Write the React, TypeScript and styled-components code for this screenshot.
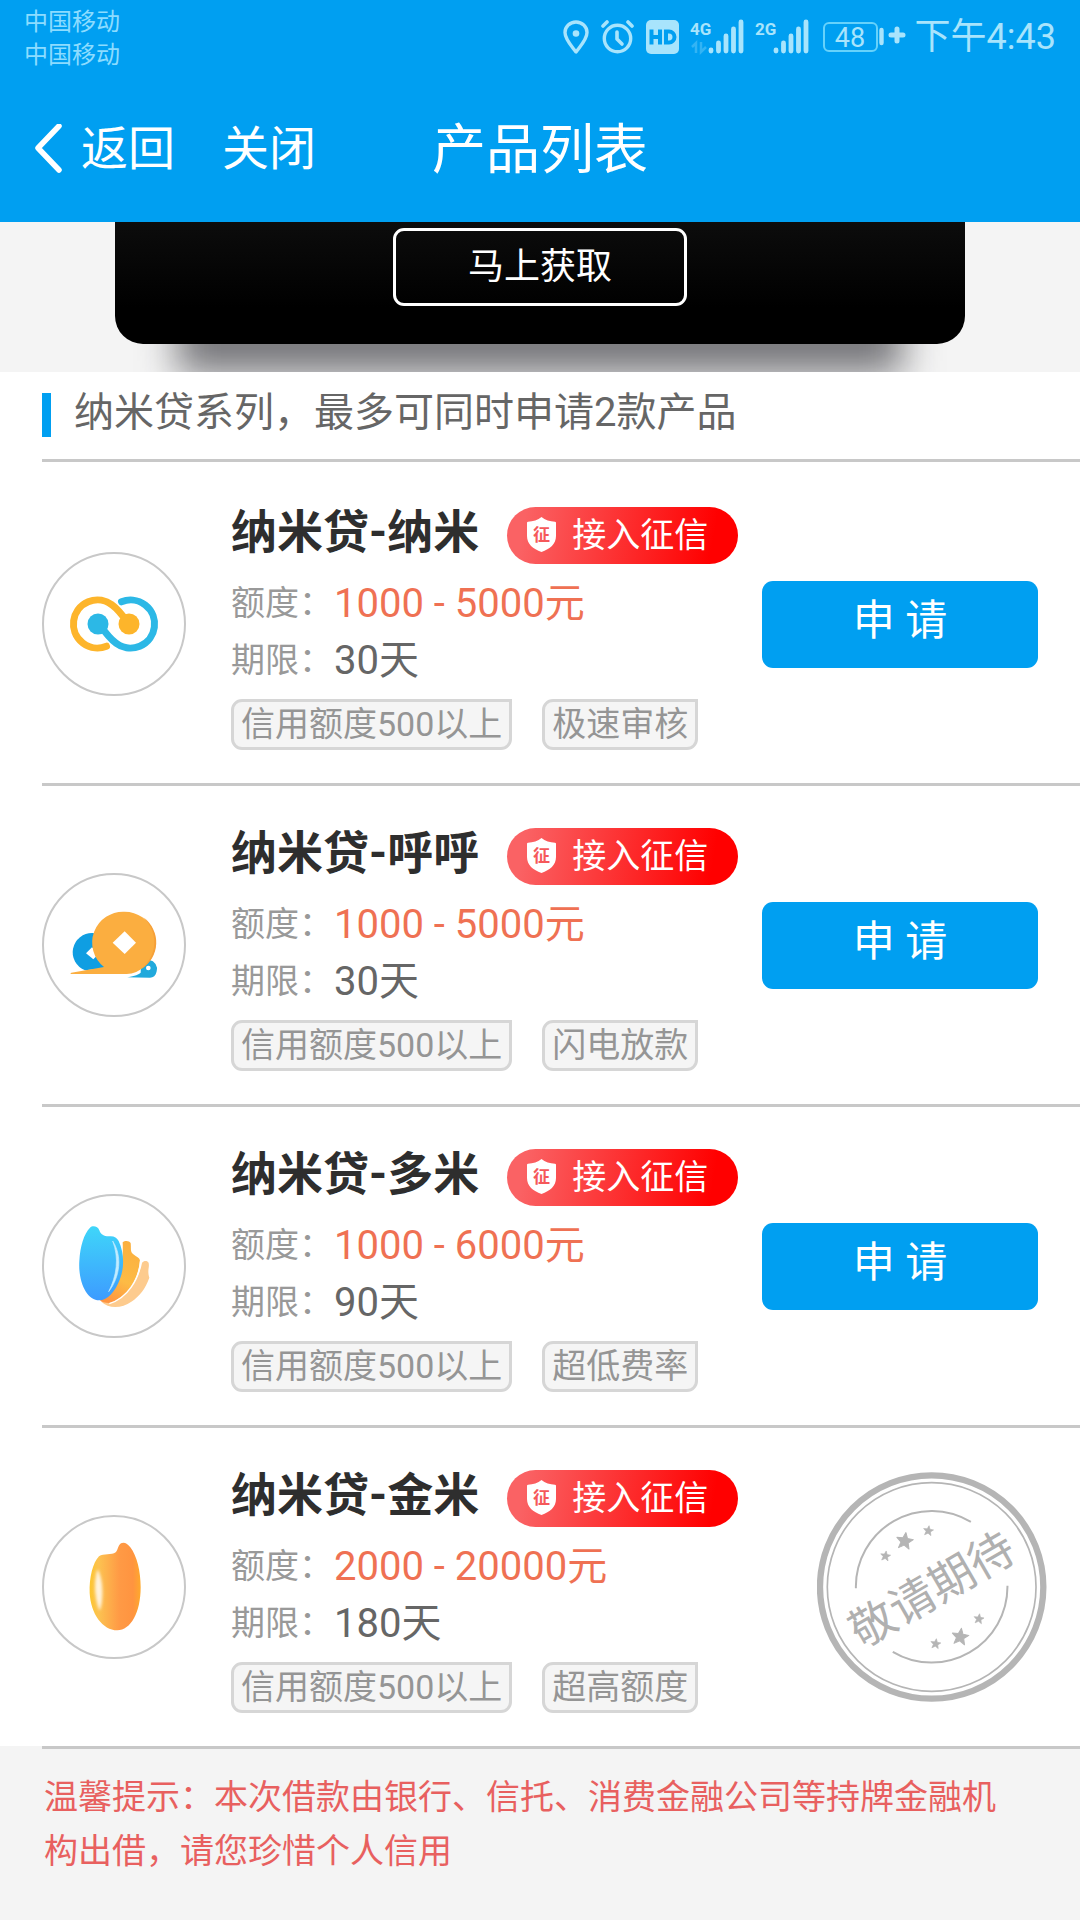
import React from "react";
import styled, { createGlobalStyle } from "styled-components";

const blue = "#009ff1";
const statusTint = "#a8e4fc";
const fontStack = `Roboto, "Noto Sans CJK SC", sans-serif`;

const GlobalStyle = createGlobalStyle`
  * { box-sizing: border-box; }
  body { margin: 0; background: #f4f4f4; font-family: ${fontStack}; }
  button { font-family: inherit; border: 0; padding: 0; background: none; cursor: pointer; }
  h1, h2, h3, p, ul, dl, dd, dt { margin: 0; padding: 0; font-weight: 400; }
  ul { list-style: none; }
  svg { display: block; flex: none; }
`;

/* ---------- header ---------- */

const Header = styled.header`
  background: ${blue};
  color: #fff;
`;

const StatusBar = styled.div`
  display: flex;
  justify-content: space-between;
  align-items: flex-start;
  height: 75px;
  padding: 0 24px;
`;

const Carriers = styled.div`
  padding-top: 6px;
  font-size: 24px;
  line-height: 33px;
  color: #8cdcff;
`;

const StatusIcons = styled.div`
  display: flex;
  align-items: center;
  gap: 12px;
  height: 74px;
  color: ${statusTint};
`;

const Clock = styled.time`
  font-size: 36px;
  line-height: 40px;
`;

const Nav = styled.nav`
  display: grid;
  grid-template-columns: 1fr auto 1fr;
  align-items: center;
  height: 147px;
`;

const NavActions = styled.div`
  display: flex;
  align-items: center;
  gap: 47px;
  padding-left: 33px;
`;

const NavButton = styled.button`
  display: flex;
  align-items: center;
  gap: 18px;
  color: #fff;
  font-size: 47px;
  line-height: 56px;
`;

const PageTitle = styled.h1`
  padding-top: 4px;
  font-size: 54px;
  line-height: 64px;
`;

/* ---------- banner ---------- */

const Banner = styled.section`
  height: 150px;
  padding: 0 115px;
  overflow: hidden;
`;

const BannerCard = styled.div`
  position: relative;
  z-index: 1;
  display: flex;
  justify-content: center;
  align-items: flex-start;
  height: 122px;
  padding-top: 6px;
  background: linear-gradient(#0c0c0c, #000 70%);
  border-radius: 0 0 28px 28px;
`;

const BannerShadow = styled.div`
  height: 70px;
  margin: -40px 62px 0;
  background: rgba(12, 12, 18, 0.54);
  filter: blur(19px);
`;

const BannerButton = styled.button`
  && { border: 3px solid #fff; }
  width: 294px;
  height: 78px;
  border-radius: 11px;
  color: #fff;
  font-size: 36px;
  line-height: 72px;
`;

/* ---------- product list ---------- */

const Products = styled.section`
  background: #fff;
`;

const SectionTitle = styled.h2`
  display: flex;
  gap: 23px;
  height: 87px;
  padding: 21px 0 0 42px;
  font-size: 40px;
  line-height: 40px;
  color: #666;

  &::before {
    content: "";
    width: 9px;
    height: 44px;
    background: ${blue};
  }
`;

const Divider = styled.hr`
  height: 3px;
  margin: 0 0 0 42px;
  border: 0;
  background: #c8c8c8;
`;

const List = styled.ul`
  padding-top: 3px;
`;

const Row = styled.div`
  display: flex;
  align-items: center;
  height: 318px;
  padding: 0 42px;
`;

const Logo = styled.div`
  flex: none;
  width: 144px;
  height: 144px;
  border: 2px solid #c8c8c8;
  border-radius: 50%;
  overflow: hidden;
`;

const Info = styled.div`
  flex: 1;
  min-width: 0;
  padding: 9px 0 0 45px;
`;

const NameLine = styled.div`
  display: flex;
  gap: 28px;
  height: 57px;
  margin-bottom: 11px;
`;

const Name = styled.h3`
  font-size: 46px;
  line-height: 50px;
  color: #2e2e2e;
  white-space: nowrap;
  && { font-weight: 700; }
`;

const CreditBadge = styled.span`
  display: flex;
  align-items: center;
  gap: 16px;
  width: 231px;
  height: 57px;
  padding: 0 0 2px 20px;
  border-radius: 29px;
  background: linear-gradient(100deg, #fa6264 8%, #ff0000 88%);
  color: #fff;
  font-size: 34px;
  line-height: 54px;
  white-space: nowrap;
`;

const Facts = styled.dl`
  margin: 0 0 10px;
`;

const Fact = styled.div`
  display: flex;
  align-items: center;
  line-height: 57px;
`;

const FactLabel = styled.dt`
  width: 103px;
  font-size: 34px;
  color: #999;
`;

const FactValue = styled.dd<{ $accent?: boolean }>`
  font-size: 40px;
  color: ${(p) => (p.$accent ? "#ef7153" : "#666")};
`;

const Tags = styled.ul`
  display: flex;
  gap: 30px;
`;

const Tag = styled.li`
  height: 51px;
  padding: 0 7px;
  border: 3px solid #d6d6d6;
  border-radius: 11px 0 11px 11px;
  background: #f5f5f5;
  font-size: 34px;
  line-height: 44px;
  color: #959595;
  white-space: nowrap;
`;

const ApplyButton = styled.button`
  flex: none;
  width: 276px;
  height: 87px;
  && { padding-bottom: 6px; }
  border-radius: 11px;
  background: ${blue};
  color: #fff;
  font-size: 42px;
  line-height: 48px;
`;

const StampBox = styled.div`
  flex: none;
  margin-right: -9px;
`;

const Notice = styled.footer`
  padding-bottom: 42px;
`;

const NoticeText = styled.p`
  padding: 21px 60px 0 44px;
  font-size: 34px;
  line-height: 54px;
  color: #e8605f;
`;

/* ---------- status icons ---------- */

const PinIcon = () => (
  <svg width="26" height="34" viewBox="0 0 26 34" fill="none" aria-hidden="true">
    <path d="M13 32C9 26.500 2 19.500 2 12.500a11 10.500 0 0 1 22 0C24 19.500 17 26.500 13 32Z" stroke="currentColor" strokeWidth="3.400" strokeLinejoin="round" />
    <circle cx="13" cy="13.500" r="3.300" fill="currentColor" />
  </svg>
);

const AlarmIcon = () => (
  <svg width="33" height="34" viewBox="0 0 33 34" fill="none" stroke="currentColor" strokeLinecap="round" aria-hidden="true">
    <circle cx="16.500" cy="18.500" r="13.200" strokeWidth="3.400" />
    <path d="M16 12v7l5 5" strokeWidth="3.600" strokeLinejoin="round" />
    <path d="M2 6l4-4M31 6l-4-4" strokeWidth="3.600" />
  </svg>
);

const HdIcon = () => (
  <svg width="33" height="34" viewBox="0 0 33 34" aria-hidden="true">
    <rect width="33" height="34" rx="5" fill="currentColor" />
    <path d="M5.500 9.500v15M14 9.500v15M5.500 17H14" stroke={blue} strokeWidth="4" fill="none" />
    <path d="M20 11.500h3a5.500 5.500 0 0 1 0 11H20Z" stroke={blue} strokeWidth="4" fill="none" />
  </svg>
);

const SignalIcon = ({ label, data }: { label: string; data?: boolean }) => (
  <svg width="53" height="36" viewBox="0 0 53 36" overflow="visible" aria-hidden="true">
    <text x="-1" y="16" fontSize="17" fontWeight="700" fontFamily={fontStack} fill="currentColor">{label}</text>
    {data && (
      <g stroke="currentColor" strokeWidth="2.500" fill="none" opacity="0.3">
        <path d="M1 28l4-4v10M10 23v10l5-5" />
      </g>
    )}
    <g stroke="currentColor" strokeWidth="4.800" strokeLinecap="round">
      <path d="M20 31v1M27.500 24v8M35 17v15M42.500 10v22M50 3v29" />
    </g>
  </svg>
);

const BatteryIcon = () => (
  <svg width="82" height="36" viewBox="0 0 82 36" overflow="visible" role="img" aria-label="48%">
    <rect x="3" y="4" width="53" height="28" rx="5" fill="none" stroke="#66d2fb" strokeWidth="2" />
    <text x="29" y="28" textAnchor="middle" fontSize="27" fontFamily={fontStack} fill="currentColor">48</text>
    <path d="M60.500 11v13" stroke="currentColor" strokeWidth="4.400" strokeLinecap="round" />
    <path d="M70 16h12M76 10v12" stroke="currentColor" strokeWidth="5" strokeLinecap="round" />
  </svg>
);

const BackIcon = () => (
  <svg width="30" height="50" viewBox="0 0 30 50" fill="none" stroke="#fff" strokeWidth="5.500" strokeLinecap="round" strokeLinejoin="round" aria-hidden="true">
    <path d="M26 2 5 24l21 22" />
  </svg>
);

/* ---------- product drawings ---------- */

const ShieldIcon = () => (
  <svg width="29" height="35" viewBox="0 0 29 35" aria-hidden="true">
    <path d="M14.500 0C18 3 23 4.500 28 4.800c1 0 1 .8 1 1.500V19c0 8-6 13-14.500 16C6 32 0 27 0 19V6.300C0 5.600 0 4.800 1 4.800 6 4.500 11 3 14.500 0Z" fill="#fff" />
    <text x="14.500" y="24" textAnchor="middle" fontSize="17" fontWeight="700" fontFamily={fontStack} fill="#f5585a">征</text>
  </svg>
);

const LoopLogo = () => (
  <svg width="140" height="140" viewBox="2 2 140 140" fill="none" strokeWidth="7" strokeLinecap="round">
    <path d="M64.500 94.200A24 24 0 1 1 70 52.900Q77 58 86 71" stroke="#fdb52b" />
    <path d="M79.500 49.800A24 24 0 1 1 74 91.100Q67 86 58 73" stroke="#2cb8e6" />
    <circle cx="56" cy="72" r="10.500" fill="#2cb8e6" />
    <circle cx="87" cy="72" r="10.500" fill="#fdb52b" />
  </svg>
);

const CoinLogo = () => (
  <svg width="140" height="140" viewBox="42 45 420 420">
    <path d="M188 219a58 58 0 0 0-23 112l62-6V226Z" fill="#0f9ee2" />
    <path d="M186 262l22 18-18 18-22-18Z" fill="#fff" />
    <path d="M286 352c22-2 36-6 46-14 0-26 12-38 26-38a27 27 0 0 1 22 34c-3 14-10 19-20 19Z" fill="#21a9dc" />
    <circle cx="355" cy="324" r="7" fill="#fff" />
    <path d="M284 155a93 93 0 0 1 60 164c-16 15-34 23-54 23H124c-3 0-3-3 0-4l98-17A93 93 0 0 1 284 155Z" fill="#fbae40" />
    <path d="M340 172a93 93 0 0 1-6 155c52-45 50-110 6-155Z" fill="#f6a038" />
    <path d="M284 214l34 34-34 34-36-34Z" fill="#fff" />
  </svg>
);

const DuomiLogo = () => (
  <svg width="140" height="140" viewBox="42 45 420 420">
    <defs>
      <linearGradient id="duoBlue" x1="0" y1="0" x2="0" y2="1">
        <stop offset="0" stopColor="#3fd6f9" />
        <stop offset="1" stopColor="#3d9bff" />
      </linearGradient>
      <linearGradient id="duoGold" x1="0.600" y1="0" x2="0.300" y2="1">
        <stop offset="0" stopColor="#fbb03f" />
        <stop offset="0.600" stopColor="#fdbb45" />
        <stop offset="1" stopColor="#ff9440" />
      </linearGradient>
    </defs>
    <path d="M336 246c6-8 16-8 20 0 3 14-5 22 2 44-12 34-30 56-54 72-28 20-68 22-90 0 60-6 112-56 122-116Z" fill="#fdcb8e" />
    <path d="M278 184c6-6 20-6 24 2 2 16-2 26 8 34 10 8 18 10 20 18-6 66-46 114-92 128-14 0-24-2-28-8 50-28 72-90 68-174Z" fill="url(#duoGold)" />
    <path d="M332 236c-2 60-42 116-94 132" fill="none" stroke="#fff" strokeWidth="4" />
    <path d="M148 240c2-44 14-82 32-100 8-8 24-4 28 8 4 12 14 18 28 18 14-2 24 2 30 14 16 34 18 78 4 114-14 38-38 64-62 64-38 0-64-56-60-118Z" fill="url(#duoBlue)" />
    <path d="M248 180c30 46 22 108-12 152 24-48 32-100 12-152Z" fill="#c3ecff" stroke="#c3ecff" strokeWidth="2" />
  </svg>
);

const JinmiLogo = () => (
  <svg width="140" height="140" viewBox="42 48 420 420">
    <defs>
      <linearGradient id="jinBody" x1="0" y1="0" x2="1" y2="0">
        <stop offset="0" stopColor="#fdc62f" />
        <stop offset="0.180" stopColor="#fcc251" />
        <stop offset="0.580" stopColor="#ff9a45" />
        <stop offset="0.850" stopColor="#ff9440" />
        <stop offset="1" stopColor="#ffa92c" />
      </linearGradient>
      <filter id="jinSoft" x="-1" y="-0.200" width="3" height="1.400">
        <feGaussianBlur stdDeviation="5" />
      </filter>
    </defs>
    <path d="M262 388c-44 0-80-50-83-112-2-46 10-92 28-110 14-10 38-2 50-12 8-8 6-20 16-27 10-5 20 2 28 12 20 26 31 72 31 120 0 76-30 129-70 129Z" fill="url(#jinBody)" />
    <path d="M203 208c-10 36-8 82 6 118 10-30 10-86-6-118Z" fill="#fff3dc" stroke="#fff3dc" strokeWidth="3" filter="url(#jinSoft)" />
  </svg>
);

const starPoints = "0,-26 7,-9 25,-8 11,4 16,22 0,12 -16,22 -11,4 -25,-8 -7,-9";

const Star = ({ x, y, scale }: { x: number; y: number; scale: number }) => (
  <polygon points={starPoints} fill="#b5b5b5" strokeWidth="3" strokeLinejoin="round" transform={`translate(${x} ${y}) rotate(8) scale(${scale})`} />
);

const Stamp = () => (
  <StampBox>
    <svg width="230" height="230" viewBox="50 38 692 692" fill="none" stroke="#b5b5b5">
      <circle cx="395" cy="384" r="336" strokeWidth="19" />
      <circle cx="395" cy="384" r="314" strokeWidth="5" />
      <path d="M167 388A228 228 0 0 1 513 188M623 380A228 228 0 0 1 278 579" strokeWidth="6" />
      <Star x={256} y={291} scale={0.6} />
      <Star x={314} y={246} scale={1} />
      <Star x={385} y={215} scale={0.6} />
      <Star x={407} y={555} scale={0.6} />
      <Star x={481} y={534} scale={1} />
      <Star x={537} y={480} scale={0.6} />
      <text x="394" y="441" textAnchor="middle" fontSize="137" fontFamily={fontStack} fill="#b0b0b0" stroke="none" transform="rotate(-30 394 388)">
        敬请期待
      </text>
    </svg>
  </StampBox>
);

/* ---------- page ---------- */

interface Product {
  name: string;
  amount: string;
  term: string;
  tags: string[];
  logo: React.ReactNode;
  open: boolean;
}

const products: Product[] = [
  { name: "纳米贷-纳米", amount: "1000 - 5000元", term: "30天", tags: ["信用额度500以上", "极速审核"], logo: <LoopLogo />, open: true },
  { name: "纳米贷-呼呼", amount: "1000 - 5000元", term: "30天", tags: ["信用额度500以上", "闪电放款"], logo: <CoinLogo />, open: true },
  { name: "纳米贷-多米", amount: "1000 - 6000元", term: "90天", tags: ["信用额度500以上", "超低费率"], logo: <DuomiLogo />, open: true },
  { name: "纳米贷-金米", amount: "2000 - 20000元", term: "180天", tags: ["信用额度500以上", "超高额度"], logo: <JinmiLogo />, open: false },
];

const ProductItem = ({ product, last }: { product: Product; last: boolean }) => (
  <li>
    <Row>
      <Logo>{product.logo}</Logo>
      <Info>
        <NameLine>
          <Name>{product.name}</Name>
          <CreditBadge>
            <ShieldIcon />
            接入征信
          </CreditBadge>
        </NameLine>
        <Facts>
          <Fact>
            <FactLabel>额度：</FactLabel>
            <FactValue $accent>{product.amount}</FactValue>
          </Fact>
          <Fact>
            <FactLabel>期限：</FactLabel>
            <FactValue>{product.term}</FactValue>
          </Fact>
        </Facts>
        <Tags>
          {product.tags.map((tag) => (
            <Tag key={tag}>{tag}</Tag>
          ))}
        </Tags>
      </Info>
      {product.open ? <ApplyButton type="button">申 请</ApplyButton> : <Stamp />}
    </Row>
    {!last && <Divider />}
  </li>
);

export default function App() {
  return (
    <>
      <GlobalStyle />
      <Header>
        <StatusBar>
          <Carriers>
            <div>中国移动</div>
            <div>中国移动</div>
          </Carriers>
          <StatusIcons>
            <PinIcon />
            <AlarmIcon />
            <HdIcon />
            <SignalIcon label="4G" data />
            <SignalIcon label="2G" />
            <BatteryIcon />
            <Clock>下午4:43</Clock>
          </StatusIcons>
        </StatusBar>
        <Nav>
          <NavActions>
            <NavButton type="button">
              <BackIcon />
              返回
            </NavButton>
            <NavButton type="button">关闭</NavButton>
          </NavActions>
          <PageTitle>产品列表</PageTitle>
        </Nav>
      </Header>
      <main>
        <Banner>
          <BannerCard>
            <BannerButton type="button">马上获取</BannerButton>
          </BannerCard>
          <BannerShadow />
        </Banner>
        <Products>
          <SectionTitle>纳米贷系列，最多可同时申请2款产品</SectionTitle>
          <Divider />
          <List>
            {products.map((product, i) => (
              <ProductItem key={product.name} product={product} last={i === products.length - 1} />
            ))}
          </List>
        </Products>
      </main>
      <Notice>
        <Divider />
        <NoticeText>温馨提示：本次借款由银行、信托、消费金融公司等持牌金融机构出借，请您珍惜个人信用</NoticeText>
      </Notice>
    </>
  );
}
